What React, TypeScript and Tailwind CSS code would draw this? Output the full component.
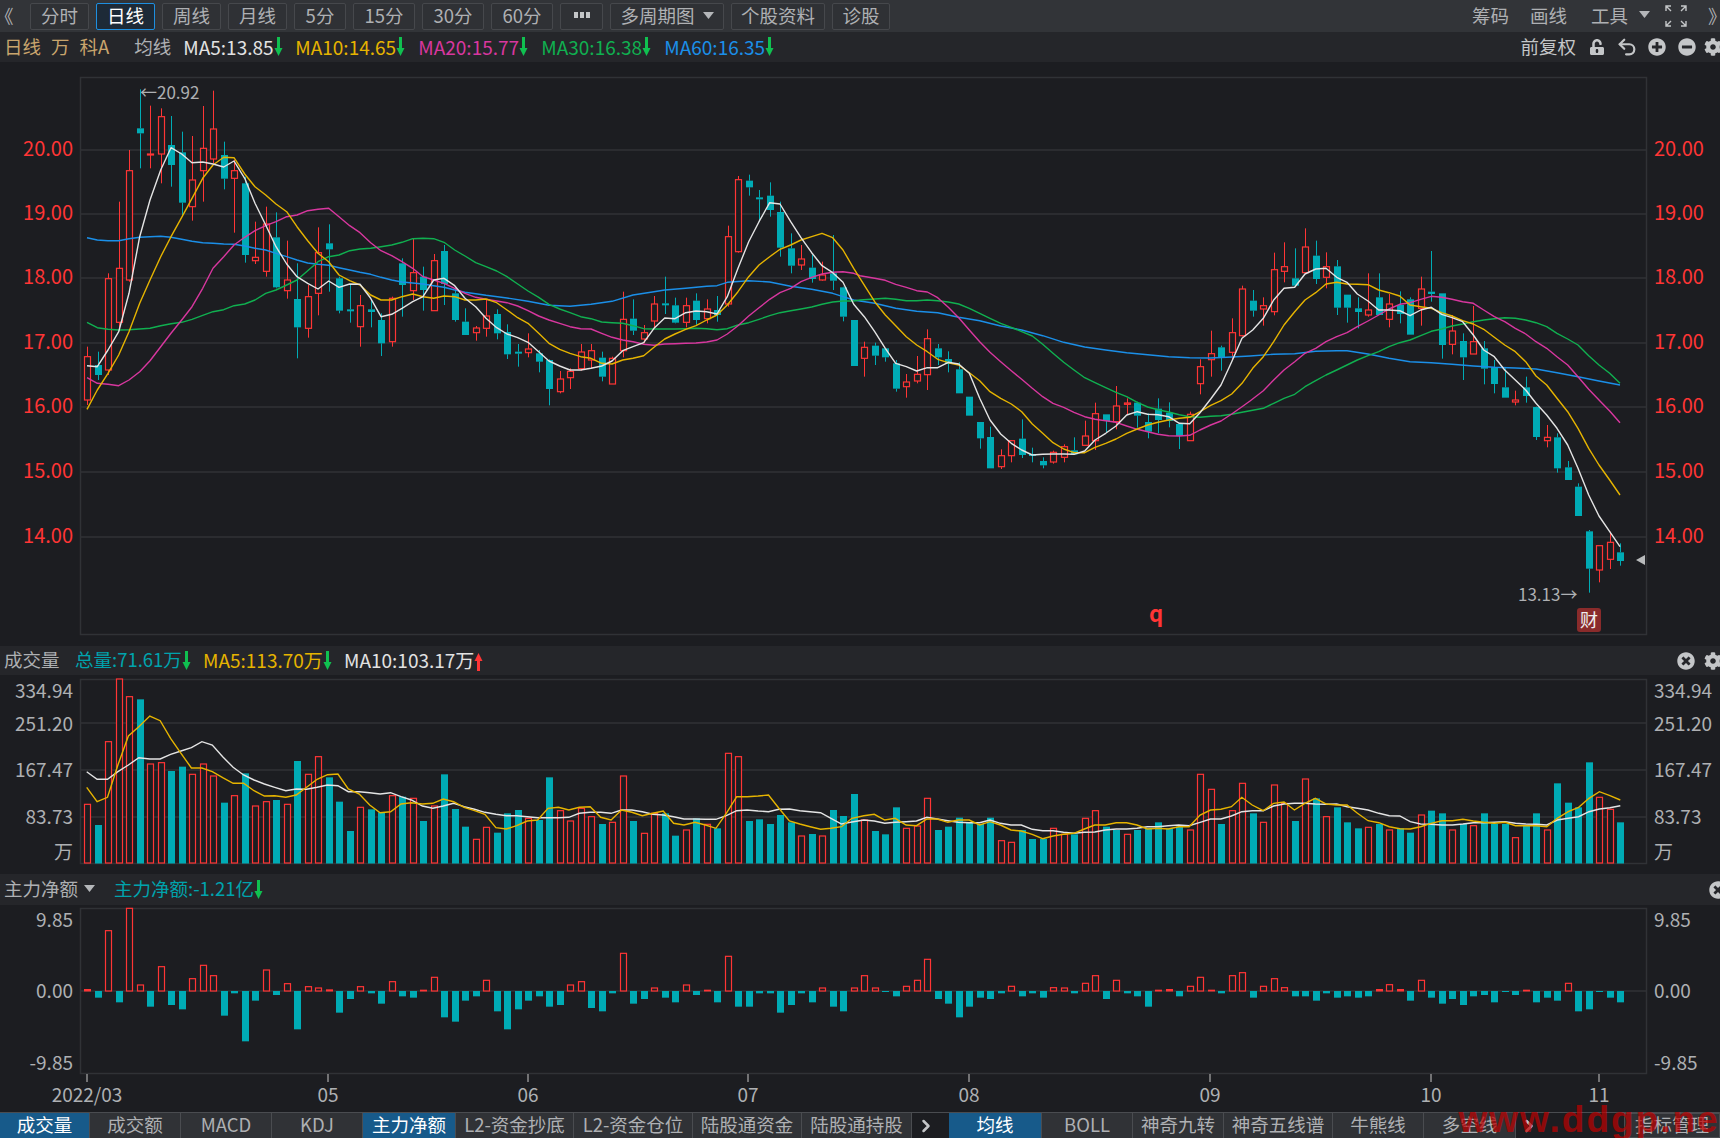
import React from 'react';
import { FaCog, FaMinusCircle, FaPlusCircle, FaTimesCircle, FaUnlockAlt } from 'react-icons/fa';
import { ChevronRight, Undo2 } from 'lucide-react';

const RED = '#ff3535';
const TEAL = '#00abb5';
const BG = '#1c1d21';
const GRID = '#303236';

// open/high values read off the chart: [up, high, bodyTop, bodyBottom, low]
type Candle = [number, number, number, number, number];

const seg1: Candle[] = [
  [1, 800, 830, 960, 975], [0, 815, 855, 885, 900], [1, 580, 596, 870, 885], [1, 365, 565, 727, 745],
  [1, 210, 272, 600, 605], [0, 28, 145, 160, 265], [1, 77, 222, 224, 265], [1, 85, 110, 222, 310],
  [0, 108, 195, 255, 320], [0, 155, 217, 368, 405], [1, 168, 300, 380, 422], [1, 78, 205, 272, 365],
  [1, 32, 147, 237, 250], [0, 185, 225, 296, 328], [1, 240, 272, 295, 458], [0, 290, 310, 525, 548],
  [1, 425, 532, 542, 552], [1, 380, 432, 574, 590], [0, 397, 472, 622, 625], [1, 482, 600, 632, 656],
  [0, 550, 657, 742, 835], [1, 615, 650, 745, 773], [1, 442, 518, 640, 706], [0, 433, 490, 508, 635],
  [0, 590, 595, 692, 700], [0, 615, 688, 692, 728], [1, 645, 677, 740, 800], [0, 660, 688, 696, 742],
  [0, 700, 720, 790, 828], [1, 650, 655, 785, 800], [0, 535, 550, 615, 710], [1, 475, 578, 632, 660],
  [0, 560, 590, 630, 692], [1, 522, 542, 692, 692], [0, 495, 513, 612, 675], [0, 625, 640, 720, 725],
  [0, 685, 725, 765, 765],
];

const seg2: Candle[] = [
  [1, 498, 504, 518, 542], [1, 420, 468, 505, 530], [0, 448, 462, 520, 538], [0, 493, 516, 583, 597],
  [0, 552, 575, 581, 620], [1, 520, 567, 578, 592], [0, 570, 580, 605, 637], [0, 598, 600, 687, 736],
  [1, 633, 657, 695, 700], [1, 625, 634, 653, 687], [1, 552, 576, 626, 632], [1, 552, 572, 600, 625],
  [0, 575, 593, 650, 664], [1, 590, 595, 672, 672], [1, 395, 478, 572, 592], [0, 418, 476, 512, 525],
  [1, 495, 518, 537, 550], [1, 408, 432, 483, 505], [0, 350, 430, 434, 462], [0, 413, 436, 488, 490],
  [1, 413, 437, 487, 502], [0, 400, 422, 480, 494], [1, 418, 447, 476, 490], [0, 408, 450, 465, 485],
  [1, 197, 230, 432, 440], [1, 48, 59, 275, 278], [0, 44, 62, 82, 107], [0, 90, 112, 118, 185],
  [0, 67, 107, 150, 170], [0, 125, 156, 263, 290], [0, 220, 265, 317, 340], [1, 255, 297, 315, 330],
  [0, 285, 323, 357, 368], [1, 305, 345, 360, 362], [0, 225, 340, 362, 390], [0, 380, 382, 470, 484],
  [0, 480, 480, 618, 618],
];

const seg3: Candle[] = [
  [1, 365, 382, 415, 470], [0, 368, 377, 407, 435], [0, 385, 385, 412, 425], [0, 420, 430, 506, 515],
  [1, 462, 486, 500, 533], [1, 408, 463, 483, 490], [1, 328, 356, 464, 510], [0, 372, 385, 412, 435],
  [0, 394, 417, 432, 457], [0, 427, 448, 520, 520], [0, 530, 530, 587, 587], [0, 606, 606, 655, 686],
  [0, 620, 651, 745, 745], [1, 688, 707, 740, 747], [1, 660, 662, 707, 727], [0, 598, 656, 705, 714],
  [0, 683, 702, 708, 727], [0, 712, 723, 736, 745], [1, 692, 697, 726, 731], [1, 673, 680, 712, 727],
  [0, 652, 691, 703, 703], [1, 602, 648, 676, 678], [1, 548, 581, 662, 690], [0, 583, 583, 603, 637],
  [1, 498, 558, 605, 628], [1, 535, 549, 553, 585], [0, 545, 548, 587, 623], [0, 580, 606, 635, 655],
  [0, 535, 566, 600, 640], [0, 547, 578, 603, 622], [0, 610, 612, 648, 687], [1, 575, 583, 662, 662],
  [1, 418, 440, 491, 523], [1, 332, 401, 419, 470], [0, 377, 382, 412, 452], [1, 295, 338, 397, 420],
  [1, 197, 207, 347, 350],
];

const seg4: Candle[] = [
  [0, 210, 242, 272, 290], [1, 232, 257, 267, 317], [1, 98, 149, 275, 286], [1, 67, 140, 154, 187],
  [0, 85, 175, 197, 197], [1, 25, 81, 158, 160], [0, 62, 107, 177, 192], [1, 97, 140, 172, 205],
  [0, 120, 139, 263, 285], [0, 224, 224, 263, 308], [0, 232, 265, 276, 325], [1, 160, 270, 285, 290],
  [0, 160, 232, 285, 285], [1, 222, 252, 298, 322], [0, 214, 255, 282, 310], [0, 232, 238, 344, 344],
  [1, 170, 207, 265, 317], [0, 93, 215, 222, 245], [0, 220, 220, 375, 416], [1, 285, 333, 373, 403],
  [0, 340, 363, 412, 480], [1, 258, 365, 402, 402], [0, 363, 385, 446, 493], [0, 420, 442, 492, 520],
  [0, 445, 502, 533, 533], [1, 512, 540, 546, 556], [0, 470, 502, 528, 548], [0, 560, 561, 651, 660],
  [1, 615, 652, 662, 682], [0, 640, 652, 745, 758], [0, 723, 742, 780, 780], [0, 790, 800, 888, 888],
  [0, 930, 934, 1046, 1118], [1, 977, 977, 1050, 1087], [1, 935, 967, 1018, 1047], [0, 970, 997, 1023, 1037],
];

const candles = [
  ...seg1.map((c) => c.map((v, k) => (k ? 80 + v / 3 : v))),
  ...seg2.map((c) => c.map((v, k) => (k ? 160 + v / 3 : v))),
  ...seg3.map((c) => c.map((v, k) => (k ? 220 + v / 3 : v))),
  ...seg4.map((c) => c.map((v, k) => (k ? 220 + v / 3 : v))),
];

// flat x,y lists, one per crop of the chart
const toPoints = (x0: number, y0: number, sx: number, sy: number, flat: number[]) => {
  const out: string[] = [];
  for (let i = 0; i < flat.length; i += 2) out.push(`${(x0 + flat[i] / sx).toFixed(1)},${(y0 + flat[i + 1] / sy).toFixed(1)}`);
  return out.join(' ');
};

const mainLine = (a: number[], b: number[], c: number[], d: number[]) =>
  [toPoints(80, 80, 3, 3, a), toPoints(470, 160, 3, 3, b), toPoints(860, 220, 3, 3, c), toPoints(1250, 220, 3, 3, d)].join(' ');

const ma5 = mainLine(
  [21, 857, 52, 860, 84, 810, 116, 755, 147, 640, 179, 470, 210, 360, 242, 270, 273, 203, 305, 222, 336, 248, 368, 246, 399, 252, 431, 261, 462, 243, 494, 295, 525, 370, 557, 435, 588, 500, 620, 552, 651, 590, 683, 610, 714, 627, 746, 603, 777, 622, 809, 612, 840, 613, 872, 655, 903, 710, 935, 703, 966, 685, 998, 665, 1029, 650, 1061, 600, 1092, 595, 1124, 617, 1155, 655],
  [17, 440, 48, 475, 80, 503, 111, 522, 143, 533, 174, 547, 206, 575, 237, 603, 269, 618, 300, 630, 332, 630, 363, 625, 395, 618, 426, 603, 458, 572, 489, 560, 521, 548, 552, 505, 584, 474, 615, 476, 647, 458, 678, 453, 710, 455, 741, 462, 772, 410, 804, 325, 836, 245, 867, 185, 899, 128, 930, 132, 962, 185, 993, 233, 1025, 278, 1056, 317, 1088, 338, 1119, 367, 1151, 433],
  [13, 290, 44, 335, 76, 385, 107, 430, 139, 440, 170, 453, 202, 443, 233, 443, 265, 427, 296, 432, 328, 460, 359, 535, 390, 600, 422, 642, 454, 670, 485, 690, 517, 705, 548, 703, 579, 702, 611, 702, 642, 703, 674, 693, 705, 660, 737, 640, 768, 618, 800, 585, 832, 575, 863, 583, 894, 584, 926, 590, 958, 610, 989, 611, 1020, 578, 1052, 537, 1083, 495, 1115, 425, 1146, 355],
  [8, 330, 40, 295, 71, 240, 102, 205, 134, 202, 165, 162, 197, 147, 228, 145, 260, 172, 291, 187, 322, 222, 354, 243, 386, 270, 417, 270, 449, 272, 480, 287, 512, 270, 544, 262, 575, 283, 606, 293, 638, 305, 670, 345, 701, 390, 733, 410, 764, 450, 796, 480, 827, 510, 858, 550, 890, 585, 921, 625, 953, 675, 984, 745, 1016, 825, 1047, 888, 1079, 935, 1110, 980],
);

const ma10 = mainLine(
  [21, 988, 52, 930, 84, 880, 116, 825, 147, 755, 179, 670, 210, 600, 242, 530, 273, 470, 305, 412, 336, 355, 368, 295, 399, 255, 431, 232, 462, 233, 494, 282, 525, 320, 557, 345, 588, 372, 620, 395, 651, 440, 683, 482, 714, 520, 746, 545, 777, 585, 809, 602, 840, 615, 872, 645, 903, 660, 935, 660, 966, 650, 998, 642, 1029, 650, 1061, 655, 1092, 648, 1124, 650, 1155, 660],
  [17, 420, 48, 417, 80, 428, 111, 450, 143, 473, 174, 490, 206, 520, 237, 550, 269, 568, 300, 580, 332, 590, 363, 595, 395, 610, 426, 612, 458, 600, 489, 595, 521, 587, 552, 562, 584, 537, 615, 522, 647, 508, 678, 497, 710, 480, 741, 465, 772, 435, 804, 395, 836, 350, 867, 315, 899, 290, 930, 268, 962, 255, 993, 240, 1025, 230, 1056, 220, 1088, 233, 1119, 270, 1151, 325],
  [0, 175, 44, 245, 76, 285, 107, 317, 139, 350, 170, 375, 202, 395, 233, 418, 265, 428, 296, 435, 328, 458, 359, 482, 390, 515, 422, 535, 454, 552, 485, 575, 517, 612, 548, 640, 579, 668, 611, 687, 642, 698, 674, 698, 705, 682, 737, 670, 768, 657, 800, 640, 832, 627, 863, 615, 894, 607, 926, 600, 958, 595, 989, 592, 1020, 575, 1052, 556, 1083, 542, 1115, 522, 1146, 490],
  [8, 445, 40, 410, 71, 365, 102, 315, 134, 275, 165, 240, 197, 218, 228, 192, 260, 187, 291, 192, 322, 193, 354, 194, 386, 210, 417, 218, 449, 228, 480, 255, 512, 260, 544, 265, 575, 278, 606, 288, 638, 302, 670, 312, 701, 328, 733, 352, 764, 375, 796, 395, 827, 425, 858, 468, 890, 495, 921, 535, 953, 575, 984, 625, 1016, 685, 1047, 735, 1079, 780, 1110, 825],
);

const ma20 = mainLine(
  [21, 893, 52, 910, 84, 913, 116, 917, 147, 900, 179, 875, 210, 842, 242, 800, 273, 760, 305, 720, 336, 680, 368, 625, 399, 565, 431, 530, 462, 495, 494, 472, 525, 452, 557, 437, 588, 425, 620, 410, 651, 405, 683, 392, 714, 388, 746, 385, 777, 410, 809, 437, 840, 458, 872, 488, 903, 512, 935, 527, 966, 545, 998, 565, 1029, 590, 1061, 600, 1092, 610, 1124, 625, 1155, 640],
  [17, 412, 48, 418, 80, 423, 111, 428, 143, 438, 174, 452, 206, 468, 237, 480, 269, 490, 300, 500, 332, 506, 363, 507, 395, 520, 426, 532, 458, 540, 489, 545, 521, 553, 552, 556, 584, 552, 615, 551, 647, 550, 678, 549, 710, 546, 741, 540, 772, 522, 804, 497, 836, 468, 867, 443, 899, 418, 930, 398, 962, 385, 993, 365, 1025, 352, 1056, 342, 1088, 337, 1119, 335, 1151, 340],
  [0, 167, 44, 175, 76, 181, 107, 193, 139, 202, 170, 212, 202, 216, 233, 233, 265, 262, 296, 293, 328, 330, 359, 365, 390, 397, 422, 425, 454, 452, 485, 478, 517, 505, 548, 530, 579, 550, 611, 562, 642, 577, 674, 590, 705, 598, 737, 602, 768, 607, 800, 618, 832, 628, 863, 635, 894, 643, 926, 647, 958, 648, 989, 646, 1020, 630, 1052, 615, 1083, 603, 1115, 582, 1146, 560],
  [0, 543, 40, 512, 71, 480, 102, 450, 134, 425, 165, 400, 197, 385, 228, 365, 260, 350, 291, 338, 322, 320, 354, 303, 386, 285, 417, 267, 449, 253, 480, 248, 512, 238, 544, 229, 575, 232, 606, 238, 638, 245, 670, 250, 701, 270, 733, 290, 764, 305, 796, 325, 827, 342, 858, 365, 890, 385, 921, 410, 953, 435, 984, 470, 1016, 508, 1047, 540, 1079, 573, 1110, 608],
);

const ma30 = mainLine(
  [21, 727, 52, 743, 84, 748, 116, 750, 147, 749, 179, 747, 210, 745, 242, 737, 273, 731, 305, 727, 336, 718, 368, 706, 399, 695, 431, 689, 462, 677, 494, 672, 525, 660, 557, 640, 588, 630, 620, 615, 651, 600, 683, 572, 714, 545, 746, 530, 777, 525, 809, 512, 840, 507, 872, 505, 903, 500, 935, 495, 966, 487, 998, 476, 1029, 475, 1061, 476, 1092, 487, 1124, 510, 1155, 528],
  [17, 308, 48, 320, 80, 333, 111, 350, 143, 372, 174, 393, 206, 412, 237, 433, 269, 447, 300, 458, 332, 470, 363, 476, 395, 486, 426, 488, 458, 490, 489, 497, 521, 506, 552, 507, 584, 507, 615, 507, 647, 506, 678, 505, 710, 506, 741, 509, 772, 506, 804, 495, 836, 488, 867, 478, 899, 467, 930, 458, 962, 452, 993, 447, 1025, 441, 1056, 433, 1088, 426, 1119, 423, 1151, 423],
  [0, 240, 44, 237, 76, 235, 107, 238, 139, 242, 170, 242, 202, 240, 233, 242, 265, 246, 296, 252, 328, 265, 359, 280, 390, 295, 422, 310, 454, 322, 485, 335, 517, 348, 548, 373, 579, 400, 611, 427, 642, 450, 674, 473, 705, 488, 737, 503, 768, 517, 800, 530, 832, 547, 863, 561, 894, 569, 926, 576, 958, 584, 989, 590, 1020, 592, 1052, 589, 1083, 587, 1115, 583, 1146, 577],
  [0, 572, 40, 565, 71, 550, 102, 535, 134, 523, 165, 500, 197, 482, 228, 465, 260, 450, 291, 435, 322, 420, 354, 407, 386, 395, 417, 380, 449, 368, 480, 360, 512, 347, 544, 334, 575, 327, 606, 318, 638, 312, 670, 305, 701, 300, 733, 296, 764, 293, 796, 295, 827, 300, 858, 308, 890, 320, 921, 340, 953, 357, 984, 375, 1016, 407, 1047, 435, 1079, 460, 1110, 490],
);

const ma60 = mainLine(
  [21, 473, 52, 480, 84, 482, 116, 482, 147, 476, 179, 472, 210, 470, 242, 469, 273, 472, 305, 478, 336, 484, 368, 488, 399, 490, 431, 492, 462, 493, 494, 498, 525, 505, 557, 510, 588, 520, 620, 530, 651, 540, 683, 549, 714, 553, 746, 556, 777, 563, 809, 570, 840, 577, 872, 583, 903, 592, 935, 600, 966, 606, 998, 609, 1029, 612, 1061, 617, 1092, 622, 1124, 630, 1155, 637],
  [17, 401, 48, 406, 111, 414, 174, 424, 237, 436, 300, 439, 363, 433, 426, 424, 489, 405, 552, 395, 584, 390, 647, 385, 710, 379, 741, 377, 772, 367, 836, 362, 899, 366, 962, 379, 1025, 388, 1088, 400, 1119, 410, 1151, 420],
  [0, 243, 44, 250, 107, 265, 170, 274, 233, 278, 296, 292, 359, 302, 422, 318, 485, 330, 548, 347, 611, 367, 674, 381, 737, 390, 800, 398, 863, 404, 926, 410, 989, 413, 1052, 414, 1115, 411],
  [0, 408, 71, 403, 134, 401, 197, 394, 260, 392, 291, 392, 354, 402, 417, 415, 480, 425, 544, 428, 606, 433, 670, 438, 733, 442, 796, 444, 858, 447, 921, 458, 984, 470, 1047, 483, 1110, 495],
);

// bar tops, minus means a falling day
const volumes = [
  463, -525, 275, 87, 140, -148, 342, 338, -363, -350, 373, 342, 378, -458, 437, -370, 468, 455, -450, 463, -333, 373, 320, -382, -455, -543,
  472, -478, -487, 437, -440, 445, -513, 468, -373, -477, -530, 568, 532, -548, -490, -480, 505, -510, -382, 482, 513, 475, 500, -522, 517, 378,
  -513, 550, 490, -490, -557, 540, -505, 523, -535, 310, 320, -513, -508, -522, -495, -517, 558, -552, 558, -480, -498, -432,
  510, -543, -553, -472, 535, 528, 445, -540, -530, -503, -517, -522, -503, 572, 577, -540, -567, -567, 535, 553, -553, 505, 482, -530, -540, 553,
  -540, -535, -517, -535, -530, 540, 373, 418, -522, 482, 400, -490, 517, 405, 460, -513, 387, -445, 500, -472, -517, -535, 532, -522, 540, -535,
  -548, 495, -482, -490, 540, -522, 527, -490, -522, -522, 563, -527, -490, 540, -400, -458, -472, -337, 442, 478, -517,
];

const volYellow = [
  toPoints(0, 650, 1.823, 3, [158, 412, 177, 455, 196, 442, 215, 345, 234, 258, 253, 230, 273, 198, 292, 212, 311, 265, 330, 310, 349, 354, 368, 354, 387, 365, 406, 383, 425, 400, 444, 400, 463, 422, 482, 438, 501, 437, 521, 442, 540, 435, 559, 412, 578, 388, 597, 374, 616, 372, 635, 417, 655, 432, 674, 465, 693, 488, 712, 485, 731, 462, 750, 458, 770, 462, 789, 460, 808, 447, 827, 455, 846, 472, 865, 482, 884, 493, 904, 533, 923, 537, 942, 527, 961, 513, 980, 510, 999, 475, 1018, 472, 1037, 480, 1056, 472, 1076, 470, 1095, 502, 1114, 510, 1133, 480, 1152, 487, 1171, 497, 1190, 490, 1209, 483, 1228, 520, 1247, 525, 1267, 517, 1286, 525, 1305, 535, 1324, 490, 1343, 440, 1362, 440, 1382, 438, 1401, 435, 1420, 475, 1439, 513, 1458, 522, 1477, 530, 1496, 538, 1515, 535, 1534, 530, 1553, 505]),
  toPoints(860, 650, 1.823, 3, [7, 497, 26, 493, 45, 510, 64, 505, 84, 525, 103, 527, 122, 507, 141, 507, 160, 517, 179, 510, 199, 510, 218, 525, 237, 515, 256, 525, 275, 540, 294, 543, 314, 553, 333, 566, 352, 558, 371, 553, 390, 550, 409, 537, 428, 525, 447, 525, 467, 518, 486, 518, 505, 525, 524, 537, 543, 535, 562, 537, 581, 530, 600, 530, 620, 495, 639, 480, 658, 478, 677, 470, 696, 442, 715, 465, 735, 482, 754, 460, 773, 456, 792, 480, 811, 460, 830, 445, 850, 462, 869, 465, 888, 465, 907, 490, 926, 512, 946, 518, 965, 530, 984, 536, 1003, 537, 1022, 530, 1041, 520, 1061, 512, 1080, 512, 1099, 508, 1118, 513, 1137, 517, 1156, 520, 1176, 517, 1195, 527, 1214, 527, 1233, 527, 1252, 530, 1271, 505, 1291, 485, 1310, 472, 1329, 445, 1348, 425, 1367, 437, 1386, 450]),
].join(' ');

const volWhite = [
  toPoints(0, 650, 1.823, 3, [158, 365, 177, 388, 196, 388, 215, 365, 234, 345, 253, 323, 273, 327, 292, 327, 311, 313, 330, 303, 349, 293, 368, 275, 387, 285, 406, 320, 425, 352, 444, 375, 463, 390, 482, 402, 501, 412, 521, 422, 540, 417, 559, 418, 578, 412, 597, 405, 616, 407, 635, 425, 655, 425, 674, 428, 693, 432, 712, 428, 731, 440, 750, 450, 770, 468, 789, 475, 808, 468, 827, 460, 846, 470, 865, 478, 884, 487, 904, 493, 923, 497, 942, 497, 961, 500, 980, 503, 999, 503, 1018, 503, 1037, 502, 1056, 490, 1076, 487, 1095, 487, 1114, 490, 1133, 480, 1152, 480, 1171, 485, 1190, 493, 1209, 495, 1228, 500, 1247, 507, 1267, 507, 1286, 508, 1305, 508, 1324, 497, 1343, 482, 1362, 480, 1382, 483, 1401, 485, 1420, 478, 1439, 477, 1458, 482, 1477, 485, 1496, 488, 1515, 505, 1534, 522, 1553, 516]),
  toPoints(860, 650, 1.823, 3, [7, 510, 26, 513, 45, 520, 64, 517, 84, 515, 103, 513, 122, 502, 141, 507, 160, 512, 179, 517, 199, 518, 218, 518, 237, 510, 256, 520, 275, 525, 294, 525, 314, 538, 333, 542, 352, 542, 371, 547, 390, 550, 409, 547, 428, 546, 447, 540, 467, 537, 486, 537, 505, 535, 524, 530, 543, 530, 562, 527, 581, 525, 600, 527, 620, 517, 639, 507, 658, 507, 677, 498, 696, 485, 715, 482, 735, 482, 754, 468, 773, 462, 792, 460, 811, 460, 830, 462, 850, 463, 869, 462, 888, 470, 907, 475, 926, 480, 946, 490, 965, 497, 984, 498, 1003, 515, 1022, 522, 1041, 523, 1061, 525, 1080, 525, 1099, 522, 1118, 518, 1137, 518, 1156, 517, 1176, 515, 1195, 520, 1214, 522, 1233, 523, 1252, 525, 1271, 510, 1291, 505, 1310, 500, 1329, 485, 1348, 477, 1367, 473, 1386, 467]),
].join(' ');

// end of each 主力净额 bar, 332 is the zero line of the crop
const netFlow = [
  327, 353, 152, 367, 85, 315, 380, 260, 375, 388, 296, 256, 287, 407, 340, 484, 362, 270, 345, 311, 448, 320, 324, 328, 398, 357, 320, 340, 371, 305, 349, 353, 329, 292, 412, 425, 362, 349, 301,
  394, 448, 388, 362, 349, 380, 375, 315, 305, 384, 394, 340, 220, 371, 357, 324, 353, 367, 315, 345, 329, 367, 229, 380, 380, 340, 340, 398, 375, 340, 367, 324, 380, 394, 324,
  287, 324, 335, 349, 319, 301, 238, 357, 371, 412, 380, 353, 357, 340, 319, 349, 340, 353, 323, 324, 340, 310, 287, 357, 301, 340, 349, 380, 329, 327, 349, 319, 292, 329, 340, 287, 278,
  353, 319, 296, 323, 349, 349, 362, 340, 353, 349, 353, 349, 327, 314, 327, 362, 301, 353, 371, 357, 375, 349, 345, 367, 335, 345, 329, 367, 353, 362, 310, 394, 388, 335, 353, 367,
];

const barX = (i: number) => Math.round(87 + 10.5 * i);

const AxisText = ({ x, y, end, size = 19, fill = '#aeb0b3', children }: { x: number; y: number; end?: boolean; size?: number; fill?: string; children: React.ReactNode }) => (
  <text x={x} y={y - 3} fontSize={size} fill={fill} textAnchor={end ? 'end' : 'start'} dominantBaseline="central">
    {children}
  </text>
);

const Arrow = ({ up, color }: { up?: boolean; color: string }) => (
  <svg width="9" height="22" viewBox="0 0 9 22" className="shrink-0">
    {up ? <path d="M4.5 3 L8.5 11 H6 V21 H3 V11 H0.5 Z" fill={color} /> : <path d="M3 1 H6 V12 H8.5 L4.5 20 L0.5 12 H3 Z" fill={color} />}
  </svg>
);

const Caret = () => (
  <svg width="11" height="7" viewBox="0 0 11 7" className="shrink-0">
    <path d="M0 0 H11 L5.5 7 Z" fill="#b4b6b9" />
  </svg>
);

const Expand = () => (
  <svg width="24" height="24" viewBox="0 0 24 24" fill="none" stroke="#c4c6c8" strokeWidth="1.4">
    <path d="M2 7 V2 H7 M2 2 L7 7 M22 7 V2 H17 M22 2 L17 7 M2 17 V22 H7 M2 22 L7 17 M22 17 V22 H17 M22 22 L17 17" />
  </svg>
);

const MoreDots = () => (
  <svg width="16" height="6" viewBox="0 0 16 6">
    <path d="M0 0 H4 V6 H0 Z M6 0 H10 V6 H6 Z M12 0 H16 V6 H12 Z" fill="#c4c6c8" />
  </svg>
);

const toolButtons = [
  { label: '分时', cls: 'w-[59px]' },
  { label: '日线', cls: 'w-[59px] border-[#1e8fe0] bg-[#1d2a37] text-white', active: true },
  { label: '周线', cls: 'w-[59px]' },
  { label: '月线', cls: 'w-[59px]' },
  { label: '5分', cls: 'w-[52px]' },
  { label: '15分', cls: 'w-[62px]' },
  { label: '30分', cls: 'w-[62px]' },
  { label: '60分', cls: 'w-[62px]' },
  { label: '', cls: 'w-[43px]', dots: true },
  { label: '多周期图', cls: 'w-[114px]', caret: true },
  { label: '个股资料', cls: 'w-[94px]' },
  { label: '诊股', cls: 'w-[58px]' },
];

const leftTabs = [
  { label: '成交量', cls: 'w-[90px]', active: true },
  { label: '成交额', cls: 'w-[91px]' },
  { label: 'MACD', cls: 'w-[91px]' },
  { label: 'KDJ', cls: 'w-[91px]' },
  { label: '主力净额', cls: 'w-[93px]', active: true },
  { label: 'L2-资金抄底', cls: 'w-[118px]' },
  { label: 'L2-资金仓位', cls: 'w-[119px]' },
  { label: '陆股通资金', cls: 'w-[109px]' },
  { label: '陆股通持股', cls: 'w-[110px]' },
];

const rightTabs = [
  { label: '均线', cls: 'w-[93px]', active: true },
  { label: 'BOLL', cls: 'w-[91px]' },
  { label: '神奇九转', cls: 'w-[91px]' },
  { label: '神奇五线谱', cls: 'w-[109px]' },
  { label: '牛熊线', cls: 'w-[91px]' },
  { label: '多空线', cls: 'w-[92px]' },
];

const Tab = ({ label, cls, active }: { label: string; cls: string; active?: boolean }) => (
  <div className={`${cls} h-full pb-[3px] flex items-center justify-center border-r border-[#4a4c50] whitespace-nowrap ${active ? 'bg-[#175a8a] text-white' : 'bg-[#303236] text-[#aeb0b3]'}`}>
    {label}
  </div>
);

const PriceChart = () => (
  <svg width="1720" height="584" viewBox="0 62 1720 584" className="block shrink-0">
    <rect x="80.5" y="77.5" width="1566" height="557" fill="none" stroke={GRID} strokeWidth="1.5" />
    {[
      ['20.00', 150],
      ['19.00', 214],
      ['18.00', 278],
      ['17.00', 343],
      ['16.00', 407],
      ['15.00', 472],
      ['14.00', 537],
    ].map(([label, y]) => (
      <g key={label}>
        <line x1="80" x2="1646" y1={y} y2={y} stroke={GRID} strokeWidth="1.5" />
        <AxisText x={73} y={y as number} end size={20} fill={RED}>{label}</AxisText>
        <AxisText x={1654} y={y as number} size={20} fill={RED}>{label}</AxisText>
      </g>
    ))}

    {candles.map(([up, hi, top, bot, lo], i) => {
      const x = barX(i);
      const color = up ? RED : TEAL;
      return (
        <g key={i} stroke={color}>
          <line x1={x + 0.5} x2={x + 0.5} y1={hi} y2={top} strokeWidth="1" />
          <line x1={x + 0.5} x2={x + 0.5} y1={bot} y2={lo} strokeWidth="1" />
          {up ? (
            <rect x={x - 2.5} y={top} width="6" height={Math.max(bot - top, 1)} fill={BG} strokeWidth="1.2" />
          ) : (
            <rect x={x - 3} y={top} width="7" height={Math.max(bot - top, 2)} fill={TEAL} stroke="none" />
          )}
        </g>
      );
    })}

    <g fill="none" strokeWidth="1.4" strokeLinejoin="round">
      <polyline points={ma60} stroke="#1b8fe8" />
      <polyline points={ma30} stroke="#10b050" />
      <polyline points={ma20} stroke="#d8379f" />
      <polyline points={ma10} stroke="#e6b400" />
      <polyline points={ma5} stroke="#e4e4e4" />
    </g>

    <text x="140" y="91" fontSize="17" fill="#aeb0b3" dominantBaseline="central">←20.92</text>
    <text x="1518" y="593" fontSize="17" fill="#aeb0b3" dominantBaseline="central">13.13→</text>
    <text x="1156" y="612" fontSize="22" fontWeight="700" fill={RED} textAnchor="middle" dominantBaseline="central">q</text>
    <rect x="1577" y="608" width="24" height="24" rx="3" fill="#8a2b2b" />
    <text x="1589" y="619" fontSize="18" fill="#eeeeee" textAnchor="middle" dominantBaseline="central">财</text>
    <path d="M1636 560 L1645 555 V565 Z" fill="#b8babc" />
  </svg>
);

const VolumeChart = () => (
  <svg width="1720" height="199" viewBox="0 675 1720 199" className="block shrink-0">
    <rect x="80.5" y="679.5" width="1566" height="184" fill="none" stroke={GRID} strokeWidth="1.5" />
    {[723, 770, 817].map((y) => (
      <line key={y} x1="80" x2="1646" y1={y} y2={y} stroke={GRID} strokeWidth="1.5" />
    ))}
    {[
      ['334.94', 692],
      ['251.20', 725],
      ['167.47', 771],
      ['83.73', 818],
      ['万', 853],
    ].map(([label, y]) => (
      <g key={label}>
        <AxisText x={73} y={y as number} end>{label}</AxisText>
        <AxisText x={1654} y={y as number}>{label}</AxisText>
      </g>
    ))}
    {volumes.map((v, i) => {
      const x = barX(i);
      const top = 650 + Math.abs(v) / 3;
      return v > 0 ? (
        <rect key={i} x={x - 2.5} y={top} width="6" height={863 - top} fill={BG} stroke={RED} strokeWidth="1.2" />
      ) : (
        <rect key={i} x={x - 3} y={top} width="7" height={863.5 - top} fill={TEAL} />
      );
    })}
    <g fill="none" strokeWidth="1.4">
      <polyline points={volWhite} stroke="#e4e4e4" />
      <polyline points={volYellow} stroke="#e6b400" />
    </g>
  </svg>
);

const NetFlowChart = () => (
  <svg width="1720" height="207" viewBox="0 905 1720 207" className="block shrink-0">
    <rect x="80.5" y="908.5" width="1566" height="165" fill="none" stroke={GRID} strokeWidth="1.5" />
    <line x1="80" x2="1646" y1="991" y2="991" stroke={GRID} strokeWidth="1.5" />
    <AxisText x={73} y={921} end>9.85</AxisText>
    <AxisText x={1654} y={921}>9.85</AxisText>
    <AxisText x={73} y={992} end>0.00</AxisText>
    <AxisText x={1654} y={992}>0.00</AxisText>
    <AxisText x={73} y={1064} end>-9.85</AxisText>
    <AxisText x={1654} y={1064}>-9.85</AxisText>
    {netFlow.map((z, i) => {
      const x = barX(i);
      const y = 880 + z / 3;
      if (z >= 332) return <rect key={i} x={x - 3} y={991} width="7" height={Math.max(y - 991, 1)} fill={TEAL} />;
      if (z >= 326) return <rect key={i} x={x - 3} y={y} width="7" height={991.5 - y} fill={RED} />;
      return <rect key={i} x={x - 2.5} y={y} width="6" height={991 - y} fill={BG} stroke={RED} strokeWidth="1.2" />;
    })}
    {[
      ['2022/03', 87],
      ['05', 328],
      ['06', 528],
      ['07', 748],
      ['08', 969],
      ['09', 1210],
      ['10', 1431],
      ['11', 1599],
    ].map(([label, x]) => (
      <g key={label}>
        <line x1={x} x2={x} y1="1074" y2="1082" stroke="#c8c8c8" />
        <text x={x} y="1093" fontSize="19" fill="#aeb0b3" textAnchor="middle" dominantBaseline="central">{label}</text>
      </g>
    ))}
  </svg>
);

export default function App() {
  return (
    <div className="relative w-[1720px] h-[1138px] overflow-hidden flex flex-col bg-[#1c1d21] text-[#aeb0b3] text-[18.5px] leading-none font-['Noto_Sans_CJK_SC','Noto_Sans','Liberation_Sans',sans-serif]">
      {/* top toolbar */}
      <div className="h-[32px] shrink-0 flex items-center bg-[#323438]">
        <span className="-ml-[5px] w-[35px] pb-[2px]">《</span>
        <div className="flex gap-[7px]">
          {toolButtons.map((b) => (
            <div
              key={b.cls + b.label}
              className={`h-[27px] pb-[2px] flex items-center justify-center gap-[8px] rounded-[2px] border whitespace-nowrap ${b.active ? '' : 'border-[#46484c] bg-[#2f3135]'} ${b.cls}`}
            >
              {b.dots ? <MoreDots /> : b.label}
              {b.caret && <Caret />}
            </div>
          ))}
        </div>
        <div className="ml-auto flex items-center">
          <span className="pb-[2px]">筹码</span>
          <span className="ml-[21px] pb-[2px]">画线</span>
          <span className="ml-[24px] pb-[2px]">工具</span>
          <span className="ml-[11px] pb-[4px]"><Caret /></span>
          <span className="ml-[14px]"><Expand /></span>
          <span className="ml-[20px] w-[12px] overflow-hidden pb-[2px]">》</span>
        </div>
      </div>

      {/* stock info row */}
      <div className="h-[30px] shrink-0 flex items-center bg-[#25262a] pl-[4px] whitespace-nowrap">
        <span className="pb-[2px] text-[#c9a56d]">日线</span>
        <span className="ml-[10px] pb-[2px] text-[#c9a56d]">万</span>
        <span className="ml-[10px] pb-[2px] text-[#c9a56d]">科A</span>
        <span className="ml-[25px] pb-[2px]">均线</span>
        <div className="ml-[12px] w-[112px] text-[19px] flex items-center text-[#e2e2e2]"><span className="pb-[2px]">MA5:13.85</span><Arrow color="#10c050" /></div>
        <div className="w-[123px] text-[19px] flex items-center text-[#e6b400]"><span className="pb-[2px]">MA10:14.65</span><Arrow color="#10c050" /></div>
        <div className="w-[123px] text-[19px] flex items-center text-[#d8379f]"><span className="pb-[2px]">MA20:15.77</span><Arrow color="#10c050" /></div>
        <div className="w-[123px] text-[19px] flex items-center text-[#10b050]"><span className="pb-[2px]">MA30:16.38</span><Arrow color="#10c050" /></div>
        <div className="text-[19px] flex items-center text-[#1b8fe8]"><span className="pb-[2px]">MA60:16.35</span><Arrow color="#10c050" /></div>
        <div className="ml-auto flex items-center text-[#c4c6c8]">
          <span className="pb-[2px]">前复权</span>
          <FaUnlockAlt size={16} className="ml-[13px]" />
          <Undo2 size={22} strokeWidth={2.4} className="ml-[11px]" />
          <FaPlusCircle size={18} className="ml-[10px]" />
          <FaMinusCircle size={18} className="ml-[12px]" />
          <span className="ml-[8px] w-[16px] overflow-hidden"><FaCog size={18} /></span>
        </div>
      </div>

      <PriceChart />

      {/* volume header */}
      <div className="h-[29px] shrink-0 flex items-center bg-[#25262a] pl-[4px] whitespace-nowrap">
        <span className="w-[71px] pb-[2px]">成交量</span>
        <div className="w-[128px] flex items-center text-[#00a3ad]"><span className="pb-[2px]">总量:71.61万</span><Arrow color="#10c050" /></div>
        <div className="w-[141px] text-[19px] flex items-center text-[#e6b400]"><span className="pb-[2px]">MA5:113.70万</span><Arrow color="#10c050" /></div>
        <div className="text-[19px] flex items-center text-[#e2e2e2]"><span className="pb-[2px]">MA10:103.17万</span><Arrow up color={RED} /></div>
        <div className="ml-auto flex items-center text-[#c4c6c8]">
          <FaTimesCircle size={18} />
          <span className="ml-[9px] w-[16px] overflow-hidden"><FaCog size={18} /></span>
        </div>
      </div>

      <VolumeChart />

      {/* 主力净额 header */}
      <div className="h-[31px] shrink-0 flex items-center bg-[#25262a] pl-[4px] whitespace-nowrap">
        <span className="pb-[2px]">主力净额</span>
        <span className="ml-[6px] pb-[2px]"><Caret /></span>
        <div className="ml-[19px] flex items-center text-[#00a3ad]"><span className="pb-[2px]">主力净额:-1.21亿</span><Arrow color="#10c050" /></div>
        <span className="ml-auto w-[11px] overflow-hidden text-[#c4c6c8]"><FaTimesCircle size={18} /></span>
      </div>

      <NetFlowChart />

      {/* bottom tabs */}
      <div className="h-[26px] shrink-0 flex items-stretch border-t border-[#4a4c50] whitespace-nowrap">
        {leftTabs.map((t) => <Tab key={t.label} {...t} />)}
        <span className="w-[37px] pl-[4px] flex items-center text-[#c4c6c8]"><ChevronRight size={20} strokeWidth={3} /></span>
        {rightTabs.map((t) => <Tab key={t.label} {...t} />)}
        <span className="w-[26px] flex items-center justify-center text-[#c4c6c8]"><ChevronRight size={20} strokeWidth={3} /></span>
        <span className="flex-1" />
        <div className="w-[96px] pb-[3px] flex items-center justify-center border border-[#4a4c50] bg-[#303236]">指标管理</div>
      </div>

      {/* site watermark */}
      <div className="absolute right-[-14px] bottom-[-2px] text-[37px] leading-[40px] font-bold tracking-[2px] text-[#c00000]/70 font-['Liberation_Sans',sans-serif]">
        www.ddgp.net
      </div>
    </div>
  );
}
